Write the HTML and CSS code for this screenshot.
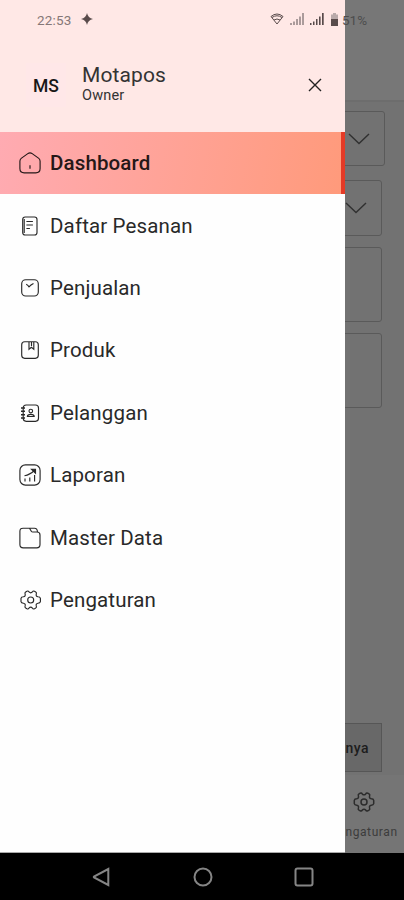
FILE: index.html
```html
<!DOCTYPE html>
<html lang="id">
<head>
<meta charset="utf-8">
<title>Motapos</title>
<link rel="stylesheet" href="styles.css">
</head>
<body>
<svg class="defs" width="0" height="0">
  <symbol id="gear" viewBox="0 0 22 22">
    <path d="M7.2 2.2Q8.6 1.6 9.3 2.9Q11 4.8 12.7 2.9Q13.4 1.6 14.8 2.2L16 2.9Q17.2 3.7 16.6 5Q15.9 7.3 18.3 7.8Q20.4 7.9 20.7 9.3V12.7Q20.4 14.1 18.3 14.2Q15.9 14.7 16.6 17Q17.2 18.3 16 19.1L14.8 19.8Q13.4 20.4 12.7 19.1Q11 17.2 9.3 19.1Q8.6 20.4 7.2 19.8L6 19.1Q4.8 18.3 5.4 17Q6.1 14.7 3.7 14.2Q1.6 14.1 1.3 12.7V9.3Q1.6 7.9 3.7 7.8Q6.1 7.3 5.4 5Q4.8 3.7 6 2.9Z"/>
    <circle cx="11" cy="11" r="3"/>
  </symbol>
</svg>
<div class="screen">
  <main class="page">
    <header class="topbar"></header>
    <section class="content">
      <div class="box select wide"><svg width="22" height="12" viewBox="0 0 22 12"><path d="M1 1l10 9.5L21 1"/></svg></div>
      <div class="box select"><svg width="22" height="12" viewBox="0 0 22 12"><path d="M1 1l10 9.5L21 1"/></svg></div>
      <div class="box card"></div>
      <div class="box card"></div>
      <div class="more">Selengkapnya</div>
    </section>
    <footer class="tabs">
      <div class="tab"><svg width="22" height="22"><use href="#gear"/></svg><span>Pengaturan</span></div>
    </footer>
  </main>

  <aside class="drawer">
    <div class="profile">
      <div class="avatar">MS</div>
      <div class="who"><div class="name">Motapos</div><div class="role">Owner</div></div>
      <svg class="close" width="14" height="14" viewBox="0 0 14 14"><path d="M1 1l12 12M13 1L1 13"/></svg>
    </div>
    <nav class="menu">
      <a class="item active"><svg class="icon" viewBox="0 0 22 22"><path d="M.9 9.2Q.9 7.4 2.2 6.4L8.8 1.6Q11 0 13.2 1.6L19.8 6.4Q21.1 7.4 21.1 9.2V16.5Q21.1 20.8 16.8 20.8H5.2Q.9 20.8.9 16.5ZM11 13.2v3.5"/></svg>Dashboard</a>
      <a class="item"><svg class="icon" viewBox="0 0 22 22"><rect x="3.7" y="2" width="14.3" height="18" rx="2.5"/><path d="M7.4 6.5h6.5M7.4 10h6.5M7.4 13.5h3.5M5.2 4v14"/></svg>Daftar Pesanan</a>
      <a class="item"><svg class="icon" viewBox="0 0 22 22"><rect x="2.7" y="2.7" width="16.6" height="16.3" rx="4"/><path d="M7.2 7.2Q9 8 10 9.8Q11.7 8 14.5 6.6"/></svg>Penjualan</a>
      <a class="item"><svg class="icon" viewBox="0 0 22 22"><rect x="2.7" y="2.7" width="16.6" height="16.6" rx="3"/><path d="M10 3v7.3l2.4-2 2.4 2V3M12.5 3v4"/></svg>Produk</a>
      <a class="item"><svg class="icon" viewBox="0 0 22 22"><rect x="4.2" y="3" width="15.3" height="16.3" rx="3"/><circle cx="11.8" cy="9" r="1.8"/><path d="M8.4 14.5Q8.4 12.3 11.8 12.3Q15.2 12.3 15.2 14.5Z"/><path class="bold" d="M2 6h4M2 9.3h4M2 12.7h4M2 16h4"/></svg>Pelanggan</a>
      <a class="item"><svg class="icon" viewBox="0 0 22 22"><rect x=".9" y=".9" width="20.2" height="20.2" rx="5.5"/><path d="M6 14.5v3M10.8 13.5v4M15.6 11v6.5M5.5 11.7Q11 10.8 15.3 6.5"/><path class="solid" d="M12.5 5.2h4v4z"/></svg>Laporan</a>
      <a class="item"><svg class="icon" viewBox="0 0 22 22"><path d="M4 1.2H10.5L12.3 4.2Q12.8 5 13.8 5H18Q21 5 21 8V17.5Q21 20.8 17.7 20.8H4.2Q.9 20.8.9 17.5V4.2Q.9 1.2 4 1.2ZM10.5 1.2H15.5Q18.3 1.2 18.5 5"/></svg>Master Data</a>
      <a class="item"><svg class="icon" viewBox="-.7 0 22 22"><use href="#gear" width="22" height="22"/></svg>Pengaturan</a>
    </nav>
  </aside>

  <div class="status">
    <span class="time">22:53</span>
    <svg class="spark" width="12" height="12" viewBox="0 0 12 12"><path d="M6 0Q7 5 12 6Q7 7 6 12Q5 7 0 6Q5 5 6 0Z"/></svg>
    <svg class="wifi" width="14" height="12" viewBox="0 0 14 12"><path d="M1 3.5Q7-1.5 13 3.5L7 11ZM2 4.5Q7 1 12 4.5M4 7Q7 5 10 7"/></svg>
    <svg class="signal dim" width="14" height="12" viewBox="0 0 14 12"><path d="M0 10h2v2H0zM3 8.5h2V12H3zM6 6h2v6H6zM9 3.5h2V12H9zM12 0h2v12h-2z"/></svg>
    <svg class="signal" width="14" height="12" viewBox="0 0 14 12"><path d="M0 10h1.5v2H0zM3 8.5h1.5V12H3zM6 6h1.5v6H6zM9 3.5h1.6V12H9zM12 0h1.7v12H12z"/></svg>
    <svg class="battery" width="7" height="13" viewBox="0 0 7 13"><path class="top" d="M2 0h3v1.5h2V7H0V1.5h2z"/><path d="M0 6h7v7H0z"/></svg>
    <span class="percent">51%</span>
  </div>

  <div class="system">
    <svg width="20" height="20" viewBox="0 0 20 20"><path d="M16.3 2v16L2 10.5Q1.5 10 2 9.5Z"/></svg>
    <svg width="20" height="20" viewBox="0 0 20 20"><circle cx="10" cy="10" r="8.5"/></svg>
    <svg width="20" height="20" viewBox="0 0 20 20"><rect x="1.5" y="1.5" width="17" height="17" rx="2"/></svg>
  </div>
</div>
</body>
</html>
```
FILE: styles.css
```css
* { box-sizing: border-box; }
body { margin: 0; font-family: Roboto, "Liberation Sans", sans-serif; color: #222; }
svg { fill: none; stroke: currentColor; flex: none; }
.defs { position: absolute; }
.screen { position: relative; width: 404px; height: 900px; overflow: hidden; display: flex; flex-direction: column; }

.page { height: 853px; background: #727272; display: flex; flex-direction: column; }
.topbar { height: 102px; background: #777; border-bottom: 2px solid #6d6d6d; flex: none; }
.content { flex: 1; padding: 9px 22px 0 20px; display: flex; flex-direction: column; }
.box { border: 1px solid #5a5a5a; border-radius: 3px; flex: none; }
.select { height: 56px; margin-bottom: 11px; display: flex; align-items: center; justify-content: flex-end; padding-right: 14px; color: #303030; }
.select svg { stroke-width: 1.4; }
.wide { height: 55px; margin: 0 -3px 14px 0; }
.card { height: 75px; margin-bottom: 11px; }
.more { height: 49px; margin-top: auto; margin-bottom: 3px; background: #686868; border: 1px solid #565656; color: #1d1d1d; font-size: 14px; font-weight: 500; letter-spacing: .5px; display: flex; align-items: center; justify-content: flex-end; padding-right: 12px; }
.tabs { height: 78px; background: #757575; display: flex; justify-content: flex-end; flex: none; }
.tab { width: 80px; display: flex; flex-direction: column; align-items: center; padding-top: 16px; color: #2c2c2c; font-size: 12px; gap: 12px; line-height: 14px; letter-spacing: .6px; }
.tab svg { stroke-width: 1.5; }
.tab span { color: #3c3c3c; }

.drawer { position: absolute; left: 0; top: 0; width: 345px; height: 853px; background: #fefefe; border-bottom: 1px solid #aaa; }
.profile { height: 132px; background: #ffe8e6; display: flex; align-items: flex-start; padding: 63px 23px 0 26px; }
.avatar { width: 40px; height: 44px; background: #ffe7e8; font-size: 17.5px; font-weight: 500; line-height: 46px; text-align: center; color: #181818; }
.who { margin-left: 16px; flex: 1; color: #333; }
.name { font-size: 21px; line-height: 25px; letter-spacing: .1px; }
.role { font-size: 14.5px; line-height: 15px; letter-spacing: .2px; }
.close { margin-top: 15px; stroke-width: 1.4; }
.item { height: 62.4px; display: flex; align-items: center; gap: 9px; padding-left: 19px; font-size: 20.5px; letter-spacing: .14px; color: #292929; }
.active { background: linear-gradient(100deg, #ffabb2, #ff9a7b); border-right: 4px solid #e53a26; font-weight: 500; color: #251818; }
.icon { width: 22px; height: 22px; stroke-width: 1.15; }
.icon .bold { stroke-width: 1.6; }
.icon .solid { fill: currentColor; }

.status { position: absolute; left: 0; top: 0; width: 404px; height: 38px; display: flex; align-items: center; padding-left: 37px; color: #594b4b; }
.time { width: 44px; font-size: 13.5px; letter-spacing: .15px; color: #857777; padding-top: 1px; }
.spark, .signal, .battery { fill: currentColor; stroke: none; }
.wifi { margin-left: 177px; }
.signal { margin-left: 6px; }
.dim { color: #ab9b9b; }
.battery { margin-left: 7px; }
.battery .top { fill: #b9aaaa; }
.percent { margin-left: 4px; font-size: 13.5px; color: #4d4d4d; padding-top: 2px; }

.system { height: 47px; background: #000; color: #858585; display: flex; align-items: center; justify-content: space-between; padding: 1px 90px 0 92px; }
.system svg { stroke-width: 2; }
```
